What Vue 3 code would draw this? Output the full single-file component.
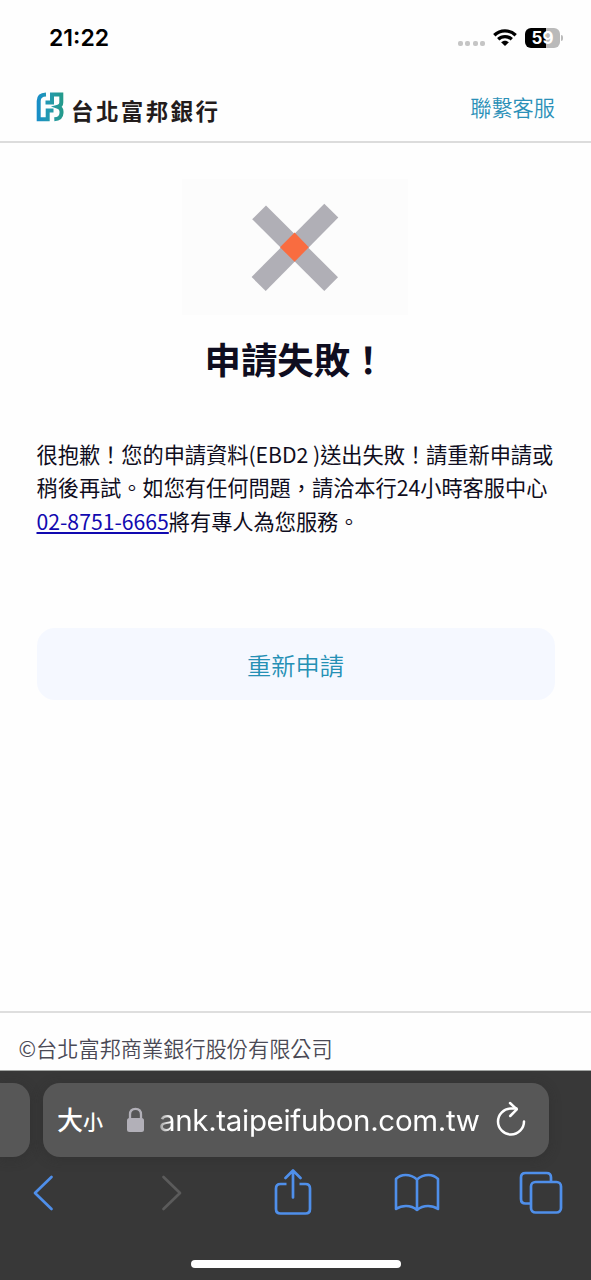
<script setup>
const signalDots = [0, 1, 2, 3]
</script>

<template>
  <div class="screen">
    <div class="status">
      <span class="time">21:22</span>
      <div class="indicators">
        <div class="dots"><i v-for="d in signalDots" :key="d"></i></div>
        <svg class="wifi" width="24" height="18" viewBox="0 0 24 18" fill="none" stroke="#000" stroke-width="3.3">
          <path d="M1.3 6.3 C7.3 .4 16.7 .4 22.7 6.3" />
          <path d="M5.2 10.3 C9 6.7 15 6.7 18.8 10.3" />
          <path d="M8.1 13.2 C10.3 11.1 13.7 11.1 15.9 13.2 L12 17.1 Z" fill="#000" stroke="none" />
        </svg>
        <div class="battery"><span class="level">59</span><i></i></div>
      </div>
    </div>

    <header class="header">
      <div class="brand">
        <svg width="28" height="30" viewBox="0 0 28 30">
          <defs>
            <linearGradient id="brand" gradientUnits="userSpaceOnUse" x1="0" y1="0" x2="28" y2="0">
              <stop offset="0" stop-color="#168ccb" />
              <stop offset=".5" stop-color="#259aac" />
              <stop offset="1" stop-color="#249a87" />
            </linearGradient>
          </defs>
          <g fill="none" stroke="url(#brand)" stroke-width="4">
            <path d="M10 2.500 Q2.700 2.800 2.700 9 V27.200 H11.700 V18.600 H17.500" />
            <path d="M9.500 10.400 H16 V2.500 H25.300 V10.500 Q25.200 14 22 14.800 Q25.500 16 25.500 19.500 V21 Q25.300 27 18.300 27.300" />
          </g>
        </svg>
        <span class="brand-name">台北富邦銀行</span>
      </div>
      <a class="contact">聯繫客服</a>
    </header>

    <main class="content">
      <div class="picture">
        <svg width="90" height="90" viewBox="0 0 90 90">
          <path d="M1.2 16.2 L15 2.5 L87 74.3 L73.3 88 Z" fill="#b0afb6" />
          <path d="M73.3 .8 L87.3 14.6 L14.7 88 L.6 74 Z" fill="#b0afb6" />
          <path d="M43.6 29.6 L57.8 44.2 L43.6 58.8 L29 44.2 Z" fill="#f96c40" />
        </svg>
      </div>
      <h1>申請失敗！</h1>
      <p>很抱歉！您的申請資料(EBD2 )送出失敗！請重新申請或<br />稍後再試。如您有任何問題，請洽本行24小時客服中心<br /><a class="phone">02-8751-6665</a>將有專人為您服務。</p>
      <button>重新申請</button>
    </main>

    <footer class="footer">©台北富邦商業銀行股份有限公司</footer>

    <div class="browser">
      <div class="tabs">
        <div class="prev-tab"></div>
        <div class="address">
          <span class="size"><b>大</b><b class="small">小</b></span>
          <svg class="lock" width="19" height="26" viewBox="0 0 19 26">
            <path d="M4 12 V7.5 Q4 1.8 9.5 1.8 T15 7.5 V12" fill="none" stroke="#b2b0b8" stroke-width="2.3" />
            <rect x="1" y="11" width="17" height="14" rx="2.5" fill="#b2b0b8" />
          </svg>
          <span class="url">ank.taipeifubon.com.tw</span>
          <svg class="reload" width="30" height="36" viewBox="0 0 30 36" fill="none" stroke="#fff" stroke-width="2.5" stroke-linecap="round" stroke-linejoin="round">
            <path d="M28 20.5 A13 13 0 1 1 15 7.5 H20.5" />
            <path d="M14 2 L20.8 8.4 L14.2 15" />
          </svg>
        </div>
      </div>
      <nav class="toolbar">
        <svg class="back" width="22" height="36" viewBox="0 0 22 36" fill="none" stroke="#4f8fea" stroke-width="2.7" stroke-linecap="round" stroke-linejoin="round"><path d="M19.500 2 L3 18 L19.500 34" /></svg>
        <svg class="forward" width="22" height="36" viewBox="0 0 22 36" fill="none" stroke="#5b5b5b" stroke-width="2.7" stroke-linecap="round" stroke-linejoin="round"><path d="M3.500 2 L20 18 L3.500 34" /></svg>
        <svg class="share" width="38" height="48" viewBox="0 0 38 48" fill="none" stroke="#4f8fea" stroke-width="2.7" stroke-linecap="round" stroke-linejoin="round">
          <path d="M12.5 15 H6.5 Q2 15 2 19.500 V40 Q2 44.500 6.5 44.500 H31.5 Q36 44.500 36 40 V19.500 Q36 15 31.5 15 H25.5" stroke-linecap="butt" />
          <path d="M19 28.500 V1.500 M11.5 9 L19 1.500 L26.5 9" />
        </svg>
        <svg class="book" width="46" height="40" viewBox="0 0 46 40" fill="none" stroke="#4f8fea" stroke-width="2.6" stroke-linecap="round" stroke-linejoin="round">
          <path d="M23 6.5 Q18 2 11.5 2 Q6 2 2 6 V36 Q6.5 33 12 33 Q18.5 33 23 37 Q27.500 33 34 33 Q39.500 33 44 36 V6 Q40 2 34.500 2 Q28 2 23 6.500 V37" />
        </svg>
        <svg class="windows" width="44" height="44" viewBox="0 0 44 44" fill="none" stroke="#4f8fea" stroke-width="2.700">
          <path d="M11.500 32.500 H6.500 Q2 32.500 2 28 V6.500 Q2 2 6.500 2 H27.500 Q32 2 32 6.500 V11" />
          <rect x="12" y="11" width="30" height="30.500" rx="4.500" />
        </svg>
      </nav>
      <div class="home"></div>
    </div>
  </div>
</template>

<style>
body { margin: 0; background: #fff; }
</style>

<style scoped>
.screen {
  width: 591px;
  height: 1280px;
  overflow: hidden;
  display: flex;
  flex-direction: column;
  background: #fefefe;
  color: #0f0d20;
  font-family: "Noto Sans CJK TC", sans-serif;
  font-weight: 350;
}
.status {
  height: 75px;
  box-sizing: border-box;
  padding: 0 28px 0 49px;
  display: flex;
  align-items: center;
  justify-content: space-between;
}
.time {
  font: 600 23px/28px Inter, sans-serif;
  color: #000;
}
.indicators { display: flex; align-items: center; }
.dots { display: flex; gap: 2.300px; margin: 12px 8px 0 0; }
.dots i { width: 5px; height: 5px; border-radius: 2px; background: #c5c5c5; }
.wifi { margin-right: 8px; }
.battery { display: flex; align-items: center; gap: 1px; }
.battery i { width: 2px; height: 6px; border-radius: 0 2px 2px 0; background: #bbb; }
.level {
  width: 35px;
  height: 20px;
  border-radius: 6px;
  background: linear-gradient(90deg, #000 59%, #bababa 59%);
  color: #fff;
  font: 700 17px/20px Inter, sans-serif;
  text-align: center;
}
.header {
  height: 68px;
  box-sizing: border-box;
  padding: 0 36px 2px;
  border-bottom: 2px solid #dcdcdc;
  display: flex;
  align-items: center;
  justify-content: space-between;
}
.brand { display: flex; align-items: center; gap: 7px; }
.brand-name {
  font-size: 22.500px;
  font-weight: 700;
  line-height: 30px;
  letter-spacing: 2.400px;
  color: #231c1c;
  margin-top: 5px;
}
.contact { color: #2b90b8; font-size: 21.200px; line-height: 32px; }
.content {
  height: 868px;
  box-sizing: border-box;
  padding: 36px 36.500px 0;
  display: flex;
  flex-direction: column;
  align-items: center;
}
.picture {
  width: 226px;
  height: 136px;
  margin-right: 1px;
  background: #fcfcfc;
  display: flex;
  align-items: center;
  justify-content: center;
}
.picture svg { margin: 2px 0 0 1px; }
h1 {
  margin: 16px 0 0;
  font-size: 36.400px;
  line-height: 54px;
  font-weight: 700;
}
p {
  margin: 52px 0 0;
  width: 100%;
  font-size: 21.200px;
  font-weight: 400;
  line-height: 33.300px;
  white-space: nowrap;
}
.phone { color: #1109b0; text-decoration: underline; }
button {
  margin-top: 91px;
  padding: 2px 0 0;
  width: 518px;
  height: 72px;
  flex: none;
  border: 0;
  border-radius: 18px;
  background: #f5f8ff;
  color: #2590b5;
  font: 350 24.200px/36px "Noto Sans CJK TC", sans-serif;
}
.footer {
  height: 60px;
  box-sizing: border-box;
  border-top: 2px solid #dedede;
  border-bottom: 1px solid #a2a5a3;
  padding: 18px 0 0 18.500px;
  font-size: 21.200px;
  line-height: 34px;
  color: #4a4955;
}
.browser {
  height: 209px;
  background: #383838;
  display: flex;
  flex-direction: column;
  align-items: center;
}
.tabs {
  width: 100%;
  display: flex;
  gap: 13px;
  padding-top: 12px;
}
.prev-tab {
  width: 30px;
  height: 74px;
  border-radius: 0 17px 17px 0;
  background: #575757;
  box-shadow: 0 2px 12px #2b2b2b66;
}
.address {
  width: 506px;
  height: 74px;
  box-sizing: border-box;
  padding: 0 21px 0 14px;
  border-radius: 17px;
  background: #575757;
  box-shadow: 0 2px 12px #2b2b2b66;
  display: flex;
  align-items: center;
  color: #fff;
}
.size { width: 69px; line-height: 36px; margin-top: 2px; white-space: nowrap; }
.size b { font-size: 26px; font-weight: 500; }
.size .small { font-size: 20px; }
.lock { flex: none; margin-right: 14px; }
.url {
  width: 324px;
  flex: none;
  font: 400 29.500px/38px Inter, sans-serif;
  letter-spacing: -.330px;
  white-space: nowrap;
  -webkit-mask-image: linear-gradient(90deg, #0006, #000 12px);
  mask-image: linear-gradient(90deg, #0006, #000 12px);
}
.reload { flex: none; margin: 0 0 2px 13px; }
.toolbar {
  width: 100%;
  height: 72px;
  box-sizing: border-box;
  padding-left: 32px;
  display: flex;
  align-items: center;
}
.forward { margin-left: 106px; }
.share { margin-left: 92px; }
.book { margin-left: 82px; }
.windows { margin-left: 79px; }
.home { width: 210px; height: 8px; margin-top: 31px; border-radius: 4px; background: #fff; }
</style>
